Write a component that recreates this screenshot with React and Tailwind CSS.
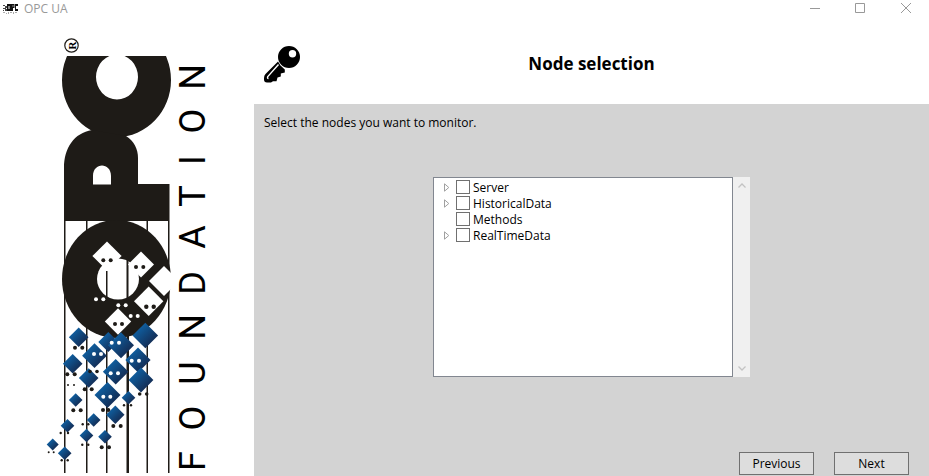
import React from 'react';

// Diamonds are [centre x, centre y, half diagonal]; dot pairs are [x1, x2, y, radius].
const whiteDiamonds = [
  [107, 256, 14.6],
  [141, 264.5, 13],
  [164, 281, 15],
  [148.7, 301.3, 14.7],
  [118, 321.5, 13.2],
];
const blueDiamonds = [
  [78.7, 337.3, 9.8], [108.3, 342, 10], [121, 345.3, 13], [145.3, 335.5, 12.8],
  [94.5, 355.7, 12.4], [138, 360, 12.6], [72.7, 363.7, 9.8], [115.7, 371.7, 12.8],
  [88.7, 378, 9.8], [141, 380, 12.4], [107.5, 395, 13], [75.7, 400, 6.8],
  [128.5, 397.7, 6.8], [115.3, 414.7, 9.2], [93.7, 420, 6.8], [67.5, 425.7, 6.8],
  [86.5, 435.5, 6.8], [105, 436.7, 6.8], [52.7, 444.5, 6], [64.7, 453.3, 6.8],
];
const whiteDots = [
  [96, 103.3, 299.3, 2], [118.3, 125.7, 305.3, 2], [130.7, 137.7, 316, 2],
  [111.7, 119, 342.7, 2], [94, 101, 354, 2], [131.7, 139, 360.7, 2],
  [110.7, 118, 373.3, 2], [103.3, 110.3, 396.7, 2],
];
const blackDots = [
  [103.3, 110.7, 260.3, 2], [136, 143.3, 267, 2], [146.3, 153.7, 306.7, 2.2],
  [115, 122, 324, 2], [75, 82.3, 347.7, 2], [67.3, 74.7, 374.3, 2],
  [68, 74, 385, 1], [84.7, 91.7, 389.3, 2], [73.3, 80.7, 410.3, 2],
  [103, 108.3, 410, 2], [139.7, 146.7, 394, 1.8], [124, 131, 405.3, 1.2],
  [113.3, 120.7, 426, 2], [82.7, 88.3, 424.3, 1.2], [60.7, 68, 433, 1.2],
  [82.3, 88.3, 444.7, 1.2], [101.7, 109, 447.3, 2], [48.7, 53.7, 452.3, 1],
  [61.7, 67.7, 460.3, 1.2], [90, 97, 371.5, 1.8],
];

function Diamonds({ items, fill }) {
  return items.map(([x, y, r]) => (
    <path key={`${x}-${y}`} fill={fill} d={`M${x} ${y - r}L${x + r} ${y}L${x} ${y + r}L${x - r} ${y}Z`} />
  ));
}

function Dots({ items, fill }) {
  return items.map(([x1, x2, y, r]) => (
    <g key={`${x1}-${y}`} fill={fill}>
      <circle cx={x1} cy={y} r={r} />
      <circle cx={x2} cy={y} r={r} />
    </g>
  ));
}

function OpcLogo() {
  return (
    <svg viewBox="0 24 254 452" className="block w-full" role="img" aria-label="OPC Foundation">
      <defs>
        <linearGradient id="blue" x1="0" y1="0" x2="1" y2="1">
          <stop offset="0.25" stopColor="#0f5c9c" />
          <stop offset="0.8" stopColor="#142b52" />
        </linearGradient>
        <clipPath id="ring">
          <rect x="60" y="215" width="111" height="130" />
        </clipPath>
        <clipPath id="cTop">
          <rect x="60" y="56" width="112" height="90" />
        </clipPath>
      </defs>

      <circle cx="71.5" cy="45.5" r="6.7" fill="none" stroke="#1e1b17" strokeWidth="1.2" />
      <text
        transform="translate(75.5 45.5) rotate(-90)"
        textAnchor="middle"
        className="text-[11px] font-bold [font-family:'Liberation_Serif',serif]"
      >
        R
      </text>

      <g fill="#1e1b17">
        <g clipPath="url(#cTop)">
          <path
            fillRule="evenodd"
            d="M62 80A54.5 57 0 0 1 171 80A54.5 57 0 0 1 62 80ZM96 77A21 22.500 0 0 0 138 77A21 22.500 0 0 0 96 77Z"
          />
        </g>
        <path
          fillRule="evenodd"
          d="M64 221V168C64 148 74 133 92 130L126 136C134 141 138 149 138 158V184H169.500V221ZM93 184.500H111V176C111 162 93 162 93 176Z"
        />
        <path d="M64 167h1.500V473h-1.500zM86 221h1.500V473h-1.500zM106 330h1.500V473h-1.500zM126.500 330h2.500V473h-2.500zM146.500 221h1.500V473h-1.500zM168 221h1.500V473h-1.500z" />
        <ellipse cx="116.500" cy="279" rx="54.500" ry="59" />
      </g>
      <ellipse cx="118" cy="279" rx="21" ry="20.500" fill="#fff" />
      <path fill="#1e1b17" d="M106 271h1.500V297h-1.500zM126.500 258h2V298h-2z" />

      <g clipPath="url(#ring)">
        <Diamonds items={whiteDiamonds} fill="#fff" />
      </g>
      <Diamonds items={blueDiamonds} fill="url(#blue)" />
      <Dots items={blackDots} fill="#1e1b17" />
      <Dots items={whiteDots} fill="#fff" />

      <text
        transform="translate(205 476) rotate(-90)"
        x="15 58 103 149 193 239 280 316 355 399"
        textAnchor="middle"
        className="text-[36px] [font-family:Roboto,sans-serif]"
      >
        FOUNDATION
      </text>
    </svg>
  );
}

function TitleBar() {
  return (
    <header className="flex h-6 shrink-0 items-start justify-between bg-white text-[#999]">
      <div className="flex items-center gap-1.5 pl-[3px]">
        <svg width="15" height="10" viewBox="0 0 15 10" aria-hidden="true">
          <path fill="#111" fillRule="evenodd" d="M4 0h4v7H4zM8 0h3.500v4H10v3H8zM12 0h3v2h-2v3h2v2h-3zM5.500 2v3h1V2zM9.500 1.500v1h1v-1z" />
          <path fill="#444" d="M0 1h2v1H0zM2 2h2v2H2zM0 4h3v1H0zM2 5h2v2H2zM0 6h1v1H0z" />
          <path fill="#aaa" d="M0 8h2v1H0zM3 9h1v1H3zM5 8h1v2H5zM7 8h2v1H7zM10 8h1v2h-1zM12 8h2v1h-2z" />
        </svg>
        <span className="text-[12px] leading-[18px]">OPC UA</span>
      </div>
      <div className="flex">
        <button type="button" aria-label="Minimize" className="grid h-4 w-[45px] place-items-center">
          <svg width="10" height="10" viewBox="0 0 10 10"><path d="M0 5.500h10" stroke="currentColor" /></svg>
        </button>
        <button type="button" aria-label="Maximize" className="grid h-4 w-[46px] place-items-center">
          <svg width="10" height="10" viewBox="0 0 10 10"><path d="M.5 .5h9v9h-9z" fill="none" stroke="currentColor" /></svg>
        </button>
        <button type="button" aria-label="Close" className="grid h-4 w-[46px] place-items-center">
          <svg width="10" height="10" viewBox="0 0 10 10"><path d="M0 0L10 10M10 0L0 10" stroke="currentColor" /></svg>
        </button>
      </div>
    </header>
  );
}

function KeyIcon() {
  return (
    <svg width="36" height="37" viewBox="0 0 36 37" aria-hidden="true">
      <path
        fillRule="evenodd"
        d="M25 0A11 11 0 1 1 25 22A11 11 0 1 1 25 0ZM28.500 4A3.700 3.700 0 1 0 28.500 11.400A3.700 3.700 0 1 0 28.500 4Z"
      />
      <path d="M14 15.500L1.500 28Q0 29.500 0 32V33.500Q0 36.500 3 36.500H7L9 35.200H12.500L13.500 31.500L16.800 30.500V27.500L20.800 26.500V23.500L16.500 19.500Z" />
      <path d="M14.500 18.500L3.800 30.500Q3 32.500 4.500 32.500" fill="none" stroke="#fff" strokeWidth="1.400" />
    </svg>
  );
}

const nodes = [
  { name: 'Server', expandable: true },
  { name: 'HistoricalData', expandable: true },
  { name: 'Methods', expandable: false },
  { name: 'RealTimeData', expandable: true },
];

function NodeTree() {
  return (
    <div className="mx-auto flex h-[200px]">
      <ul className="w-[300px] border border-[#828790] bg-white pt-px pl-2">
        {nodes.map((node) => (
          <li key={node.name} className="flex h-4 items-center">
            <span className="flex w-3.5 shrink-0 justify-start">
              {node.expandable && (
                <button type="button" aria-label={`Expand ${node.name}`} className="pl-0.5">
                  <svg width="6" height="9" viewBox="0 0 6 9" className="block">
                    <path d="M.5 .8V8.200L4.800 4.500Z" fill="#fff" stroke="#a0a0a0" />
                  </svg>
                </button>
              )}
            </span>
            <label className="flex items-center gap-[3px]">
              <input type="checkbox" className="size-3.5 appearance-none border border-[#707070] bg-white checked:bg-[#707070]" />
              <span className="pt-0.5 text-[12px] leading-4">{node.name}</span>
            </label>
          </li>
        ))}
      </ul>
      <div className="flex w-[17px] flex-col items-center justify-between bg-[#f0f0f0] py-1 text-[#c3c3c3]">
        <button type="button" aria-label="Scroll up">
          <svg width="8" height="9" viewBox="0 0 8 9" className="block"><path d="M.5 6.500L4 3L7.500 6.500" fill="none" stroke="currentColor" strokeWidth="1.300" /></svg>
        </button>
        <button type="button" aria-label="Scroll down">
          <svg width="8" height="9" viewBox="0 0 8 9" className="block"><path d="M.5 2.500L4 6L7.500 2.500" fill="none" stroke="currentColor" strokeWidth="1.300" /></svg>
        </button>
      </div>
    </div>
  );
}

function WizardButton({ children }) {
  return (
    <button type="button" className="h-[23px] w-[75px] border border-[#707070] bg-[#ddd] text-[12px] leading-5 hover:bg-[#e5f1fb]">
      {children}
    </button>
  );
}

export default function App() {
  return (
    <div className="flex min-h-screen flex-col bg-white text-black [font-family:'Segoe_UI','Open_Sans','Noto_Sans',sans-serif]">
      <TitleBar />
      <div className="flex flex-1">
        <aside className="w-[254px] shrink-0">
          <OpcLogo />
        </aside>
        <main className="flex min-w-0 flex-1 flex-col bg-[#d3d3d3]">
          <div className="grid h-20 grid-cols-[36px_1fr_36px] items-center bg-white px-2.5">
            <KeyIcon />
            <h1 className="text-center text-[17px] leading-6 font-bold">Node selection</h1>
          </div>
          <p className="px-2.5 pt-2.5 text-[12px] leading-[18px]">Select the nodes you want to monitor.</p>
          <div className="flex flex-1 pt-[45px]">
            <NodeTree />
          </div>
          <div className="flex justify-end gap-5 pr-5 pb-px">
            <WizardButton>Previous</WizardButton>
            <WizardButton>Next</WizardButton>
          </div>
        </main>
      </div>
    </div>
  );
}
